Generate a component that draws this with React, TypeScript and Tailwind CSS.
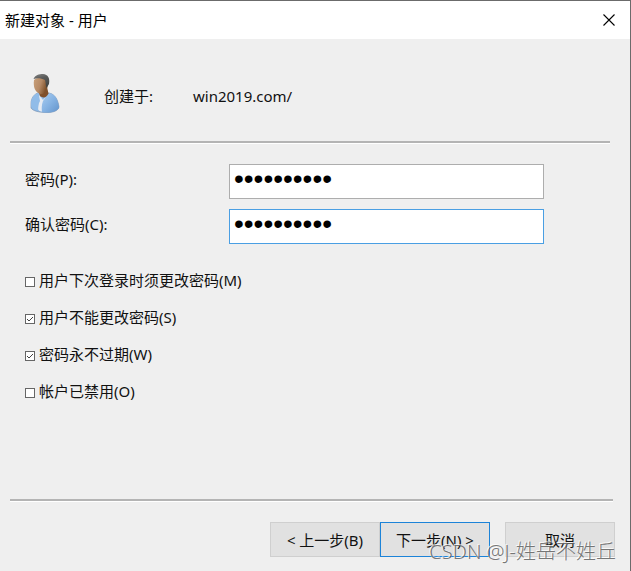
import React, { useState } from "react";

type OptionKey = "mustChange" | "cannotChange" | "neverExpires" | "disabled";

const OPTIONS: { key: OptionKey; label: string }[] = [
  { key: "mustChange", label: "用户下次登录时须更改密码(M)" },
  { key: "cannotChange", label: "用户不能更改密码(S)" },
  { key: "neverExpires", label: "密码永不过期(W)" },
  { key: "disabled", label: "帐户已禁用(O)" },
];

const UserIcon: React.FC = () => (
  <svg width="32" height="42" viewBox="0 0 32 42" aria-hidden="true">
    <defs>
      <linearGradient id="shirt" x1="0" y1="0" x2="1" y2="1">
        <stop offset="0" stopColor="#a9cdf0" />
        <stop offset="0.5" stopColor="#86b3e3" />
        <stop offset="1" stopColor="#6394cb" />
      </linearGradient>
      <linearGradient id="skin" x1="0" y1="0" x2="1" y2="0.4">
        <stop offset="0" stopColor="#c9a07a" />
        <stop offset="0.55" stopColor="#b68a66" />
        <stop offset="1" stopColor="#7d5029" />
      </linearGradient>
      <linearGradient id="hair" x1="0" y1="0" x2="0.3" y2="1">
        <stop offset="0" stopColor="#858585" />
        <stop offset="0.4" stopColor="#5a5b5a" />
        <stop offset="1" stopColor="#444543" />
      </linearGradient>
    </defs>
    <path d="M1 31C1 25 4 21 9 19.5L19 20C25 21 28 27 29 34C28 38 23 39.5 17 39.5C9 39.5 3 38 1 35Z" fill="url(#shirt)" stroke="#8198b4" strokeWidth="0.7" />
    <path d="M9 22L13 27L18 21L15 39C12 39 9 38 8 37Z" fill="#e6ebf2" />
    <path d="M8.5 20L10 28C8 31 7.5 35 8.5 38C3 37 1 35 1 31C1 25 4 21 8.5 20Z" fill="#91bce8" />
    <path d="M18.5 20L13 28C11.500 32 11.500 36 12 39C18 40.5 26 39 29 35C28 26 25 21 18.5 20Z" fill="url(#shirt)" />
    <path d="M9 20L17 14L18.5 20.5C17 24 14 26 10 23Z" fill="#80502a" />
    <path d="M4 7C7 4 14 4 17.5 7L17.5 14C16 19 13 22 10 21C5 19 3 14 4 7Z" fill="url(#skin)" />
    <path d="M3.5 6C5 2 9 1 13 1C18 1.5 20 5 19 11L16.5 15C15.5 13 16 10 15 7C11 5 7 5 3.5 6Z" fill="url(#hair)" />
  </svg>
);

const Divider: React.FC = () => (
  <hr className="h-[3px] border-0 border-t-2 border-b border-t-[#b4b4b4] border-b-white" />
);

const PasswordField: React.FC<{ id: string; label: string; active?: boolean }> = ({ id, label, active }) => {
  const [value, setValue] = useState("Passw0rd19");

  return (
    <div className="flex">
      <label htmlFor={id} className="w-[204px] shrink-0 pt-[5px]">
        {label}
      </label>
      <input
        id={id}
        type="password"
        value={value}
        onChange={(e) => setValue(e.target.value)}
        className={
          active
            ? "h-[35px] min-w-0 flex-1 border border-[#4a9fe3] bg-white px-1 pb-[5px] font-['Liberation_Sans'] text-[28px] leading-7 text-black outline-none"
            : "h-[35px] min-w-0 flex-1 border border-[#adadad] bg-white px-1 pb-[5px] font-['Liberation_Sans'] text-[28px] leading-7 text-black outline-none"
        }
      />
    </div>
  );
};

export default function App() {
  const [checked, setChecked] = useState<Record<OptionKey, boolean>>({
    mustChange: false,
    cannotChange: true,
    neverExpires: true,
    disabled: false,
  });

  const toggle = (key: OptionKey) => setChecked((prev) => ({ ...prev, [key]: !prev[key] }));

  return (
    <div className="relative flex min-h-screen flex-col border-t border-r border-[#6b6b6b] bg-[#efefef] font-['Noto_Sans','Noto_Sans_CJK_SC',sans-serif] text-[15px] leading-5 text-[#111]">
      <header className="flex h-[38px] items-center justify-between bg-white pr-[15px] pl-[5px] text-black">
        <h1>新建对象 - 用户</h1>
        <button type="button" aria-label="关闭" className="flex h-5 w-3 items-center justify-center">
          <svg width="12" height="12" viewBox="0 0 12 12" stroke="currentColor" strokeWidth="1.1">
            <path d="M0.5 0.5L11.5 11.5M11.5 0.5L0.5 11.5" />
          </svg>
        </button>
      </header>

      <form className="flex flex-1 flex-col pl-[10px]" onSubmit={(e) => e.preventDefault()}>
        <div className="flex h-[102px] items-center pt-2 pl-5">
          <UserIcon />
          <span className="ml-[42px] w-[89px] pt-1">创建于:</span>
          <span className="pt-1">win2019.com/</span>
        </div>
        <div className="pr-5">
          <Divider />
        </div>

        <div className="flex flex-col gap-[10px] pt-5 pr-[86px] pl-[15px]">
          <PasswordField id="password" label="密码(P):" />
          <PasswordField id="confirm" label="确认密码(C):" active />
        </div>

        <div className="flex flex-col items-start gap-[17px] pt-[26px] pb-8 pl-[15px]">
          {OPTIONS.map((o) => (
            <label key={o.key} className="flex items-center gap-1">
              <span className="relative mt-1 flex">
                <input
                  type="checkbox"
                  checked={checked[o.key]}
                  onChange={() => toggle(o.key)}
                  className="h-[10px] w-[10px] appearance-none border border-[#666] bg-white"
                />
                {checked[o.key] && (
                  <svg className="pointer-events-none absolute inset-0" width="10" height="10" viewBox="0 0 10 10" fill="none" stroke="#444">
                    <path d="M2 5L4 7L8 3" />
                  </svg>
                )}
              </span>
              {o.label}
            </label>
          ))}
        </div>

        <footer className="mt-auto">
          <div className="pr-[17px]">
            <Divider />
          </div>
          <div className="flex justify-end pt-5 pr-[15px] pb-[14px]">
            <button type="button" className="h-[35px] w-[110px] border border-[#cfcfcf] bg-[#e1e1e1]">
              &lt; 上一步(B)
            </button>
            <button type="submit" className="h-[35px] w-[110px] border border-[#1c83d8] bg-[#e1e1e1]">
              下一步(N) &gt;
            </button>
            <button type="button" className="ml-[15px] h-[35px] w-[110px] border border-[#cfcfcf] bg-[#e1e1e1]">
              取消
            </button>
          </div>
        </footer>
      </form>

      {/* watermark */}
      <div className="pointer-events-none absolute right-[14px] bottom-[5px] text-xl leading-7 font-light whitespace-nowrap text-[#666]/90 [text-shadow:-1px_-1px_0_#ffffffcc]">
        CSDN @J-姓岳不姓丘
      </div>
    </div>
  );
}
